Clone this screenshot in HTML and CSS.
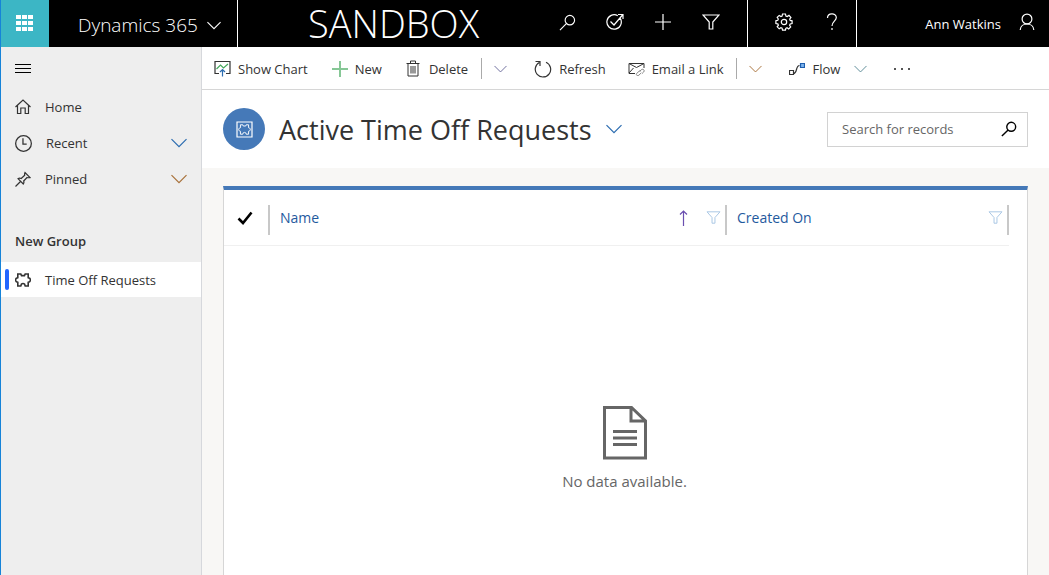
FILE: index.html
```html
<!DOCTYPE html>
<html lang="en">
<head>
  <meta charset="UTF-8" />
  <meta name="viewport" content="width=device-width, initial-scale=1.0" />
  <title>Active Time Off Requests - Dynamics 365</title>
  <link rel="stylesheet" href="styles.css">
</head>
<body>
  <!-- shared icons -->
  <svg class="defs" aria-hidden="true">
    <symbol id="chevron" viewBox="0 0 16 10">
      <path d="M.5 1.2 8 8.7l7.500-7.500" />
    </symbol>
    <symbol id="search" viewBox="0 0 18 18">
      <circle cx="11.500" cy="6.500" r="5" />
      <path d="M8 10 1 17" />
    </symbol>
    <symbol id="filter" viewBox="0 0 18 16">
      <path d="M1 1h16l-6.200 7v7H7.200V8z" />
    </symbol>
    <symbol id="puzzle" viewBox="0 0 16 14">
      <path d="M2.800 1h3l.7 1.600h3L10.200 1h3v3.700l1.300.5c1.200 1 1.200 2.600 0 3.600l-1.300.5V13h-3l-.6-1.800c-.8-.7-2.400-.7-3.200 0L5.800 13h-3V9.300l-1.300-.5c-1.200-1-1.200-2.600 0-3.600l1.300-.5z" />
    </symbol>
  </svg>

  <header class="topbar">
    <button class="waffle" aria-label="Apps">
      <svg width="18" height="18" viewBox="0 0 18 18"><path d="M0 0h5v4H0zM6 0h5v4H6zM12 0h5v4h-5zM0 6h5v4H0zM6 6h5v4H6zM12 6h5v4h-5zM0 12h5v4H0zM6 12h5v4H6zM12 12h5v4h-5z" /></svg>
    </button>
    <button class="brand">Dynamics 365 <svg class="icon" width="14" height="9"><use href="#chevron" /></svg></button>
    <div class="env">SANDBOX</div>
    <div class="tools">
      <button aria-label="Search"><svg class="icon" width="17" height="17"><use href="#search" /></svg></button>
      <button aria-label="Assistant">
        <svg class="icon" width="18" height="18" viewBox="0 0 18 18">
          <path d="M14.400 5.500a7.200 7.200 0 1 1-2.600-2.700M4.500 8.500 8 12l8.500-10M12 1.500h5V6" />
        </svg>
      </button>
      <button aria-label="New record"><svg class="icon" width="18" height="18" viewBox="0 0 18 18"><path d="M9 1v16M1 9h16" /></svg></button>
      <button aria-label="Advanced find"><svg class="icon" width="18" height="16"><use href="#filter" /></svg></button>
    </div>
    <div class="tools help">
      <button aria-label="Settings">
        <svg class="icon" width="18" height="18" viewBox="0 0 18 18">
          <circle cx="9" cy="9" r="2.700" />
          <path d="M7.500 1h3l.4 2 1.300.6L14 2.400 15.900 4.500l-1.200 1.600.5 1.300 1.900.4v2.800l-1.900.4-.6 1.300 1.100 1.700-2 2-1.700-1.200-1.200.6-.3 1.700h-3l-.4-1.900-1.200-.5L4.200 15.800 2.200 13.800l1.200-1.700-.6-1.200L.9 10.500V7.700l1.900-.4.5-1.300L2.200 4.300l2-1.900 1.700 1.100L7.100 3z" />
        </svg>
      </button>
      <button aria-label="Help"><svg class="icon" width="12" height="18" viewBox="0 0 12 18"><path d="M1.500 5C1.500-.3 10.300-.3 10.300 4.500c0 3.500-4.300 4-4.300 8.500M6 15v2" /></svg></button>
    </div>
    <button class="user">Ann Watkins
      <svg class="icon" width="16" height="18" viewBox="0 0 16 18"><circle cx="8" cy="6" r="4.900" /><path d="M1.200 17c.5-8 13.100-8 13.600 0" /></svg>
    </button>
  </header>

  <div class="layout">
    <nav class="sidebar">
      <button class="burger" aria-label="Menu"><svg class="icon" width="16" height="11" viewBox="0 0 16 11"><path d="M0 1.500h16M0 5.500h16M0 9.500h16" /></svg></button>
      <ul>
        <li><a href="#">
          <svg class="icon" width="16" height="16" viewBox="0 0 16 16"><path d="M.5 8 8 1l7.500 7M2.500 6.500v8h3.300V9h4.400v5.500h3.300v-8" /></svg>
          <span>Home</span></a></li>
        <li><a href="#">
          <svg class="icon" width="17" height="17" viewBox="0 0 16 16"><circle cx="8" cy="8" r="7.400" /><path d="M7.500 3v5.500H11" /></svg>
          <span>Recent</span>
          <svg class="icon blue" width="16" height="10"><use href="#chevron" /></svg></a></li>
        <li><a href="#">
          <svg class="icon" width="16" height="16" viewBox="0 0 16 16"><path d="m.5 15.500 5-5M3 7.700l5.300 5.300c.8-1.200.8-2 .4-3l3.300-3.500c1 .4 2 .3 3 .1L10 1.500c-.5 1-.5 1.800-.3 2.800L6.200 7.500C5 7 4 7 3 7.700z" /></svg>
          <span>Pinned</span>
          <svg class="icon brown" width="16" height="10"><use href="#chevron" /></svg></a></li>
      </ul>
      <h2>New Group</h2>
      <ul>
        <li class="selected"><a href="#">
          <svg class="icon bold" width="16" height="14"><use href="#puzzle" /></svg>
          <span>Time Off Requests</span></a></li>
      </ul>
    </nav>

    <main>
      <div class="commands">
        <button class="cmd chart">
          <svg class="icon" width="17" height="17" viewBox="0 0 17 17"><path d="M5 13.500H1v-12h15v12h-4" /><path class="green" d="m2.500 9 4-4 3 3L14 4" /><path class="blue" d="M8.500 16.500v-7M6 12l2.500-2.500L11 12" /></svg>
          Show Chart</button>
        <button class="cmd">
          <svg class="icon green-light" width="16" height="16" viewBox="0 0 16 16"><path d="M8 0v16M0 8h16" /></svg>
          New</button>
        <button class="cmd delete">
          <svg class="icon thin" width="14" height="17" viewBox="0 0 14 17"><path d="M.5 3.500h13M4.500 3V1h5v2M2 3.500V16h10V3.500M5 6v7.500M7 6v7.500M9 6v7.500" /></svg>
          Delete</button>
        <button class="more" aria-label="More delete options"><svg class="icon purple" width="13" height="8"><use href="#chevron" /></svg></button>
        <button class="cmd refresh">
          <svg class="icon" width="18" height="18" viewBox="0 0 18 18"><path d="M12 2.200a7.700 7.700 0 1 1-6.700.3M1.500 1.500H6v4.500" /></svg>
          Refresh</button>
        <button class="cmd email">
          <svg class="icon thin" width="17" height="15" viewBox="0 0 17 15"><path d="M7 12.500H1v-10h15V7M1 2.500l7.500 4 7.500-4M1 12l4.500-5" /><path class="grey" d="m11.500 10.500 1.700-1.700c1.800-1.500 4 .5 2.500 2.200l-1.800 1.700M13 10l-1.400-.2-3 2.700c-1 1.500 1 3 2.300 1.700l2.400-2.400" /></svg>
          Email a Link</button>
        <button class="more" aria-label="More email options"><svg class="icon brown" width="13" height="8"><use href="#chevron" /></svg></button>
        <button class="cmd flow">
          <svg class="icon" width="16" height="14" viewBox="0 0 16 14"><path d="M.5 8.500h4v4h-4zM4.500 11.500c4 0 2-8 6-8" /><path class="node" d="M11.500 1.500h4v4h-4z" /></svg>
          Flow
          <svg class="icon teal" width="13" height="8"><use href="#chevron" /></svg></button>
        <button class="dots" aria-label="More commands"><svg width="16" height="2" viewBox="0 0 16 2"><path d="M0 0h2v2H0zM7 0h2v2H7zM14 0h2v2h-2z" /></svg></button>
      </div>

      <div class="heading">
        <span class="entity"><svg class="icon" width="17" height="17" viewBox="0 0 17 17"><path d="M1 1h15v15H1z" /><use href="#puzzle" x="2" y="3" width="13" height="11" /></svg></span>
        <h1>Active Time Off Requests</h1>
        <button class="view" aria-label="Select a view"><svg class="icon blue" width="16" height="10"><use href="#chevron" /></svg></button>
        <form class="search">
          <input type="text" placeholder="Search for records" aria-label="Search for records" />
          <button type="button" aria-label="Start search"><svg class="icon" width="16" height="16"><use href="#search" /></svg></button>
        </form>
      </div>

      <section class="card">
        <table>
          <thead>
            <tr>
              <th class="check"><div><svg class="icon" width="16" height="14" viewBox="0 0 16 14"><path d="m1.500 7.500 4.500 4.500L14.500 1.500" /></svg></div></th>
              <th><div><a href="#">Name</a>
                <svg class="icon sort" width="9" height="16" viewBox="0 0 9 16"><path d="M4.500 16V1M1 4.500 4.500 1 8 4.500" /></svg>
                <svg class="icon pale" width="15" height="13"><use href="#filter" /></svg></div></th>
              <th class="created"><div><a href="#">Created On</a>
                <svg class="icon pale" width="15" height="13"><use href="#filter" /></svg></div></th>
            </tr>
          </thead>
        </table>
        <div class="empty">
          <svg width="46" height="54" viewBox="0 0 46 54"><path class="sheet" d="M2.500 1.500H29.500L43.500 15v37h-41zM29 1.500V15h14.500" /><path class="lines" d="M11 25.500h24M11 32h24M11 38.500h24" /></svg>
          <p>No data available.</p>
        </div>
      </section>
    </main>
  </div>
</body>
</html>
```
FILE: styles.css
```css
* {
  box-sizing: border-box;
}

body {
  margin: 0;
  min-height: 100vh;
  display: flex;
  flex-direction: column;
  border-left: 1px solid #1683d8;
  font-family: "Open Sans", "Segoe UI", sans-serif;
  font-size: 13px;
  color: #333;
  background: #f8f7f5;
}

button {
  display: flex;
  align-items: center;
  padding: 0;
  border: none;
  background: none;
  color: inherit;
  font: inherit;
  white-space: nowrap;
  cursor: pointer;
}

a {
  color: inherit;
  text-decoration: none;
}

ul {
  margin: 0;
  padding: 0;
  list-style: none;
}

.defs {
  display: none;
}

.icon {
  flex: none;
  fill: none;
  stroke: currentColor;
  stroke-width: 1.2;
}

.blue { stroke: #2b6cb0; }
.brown { stroke: #a8713a; }
.purple { stroke: #6c6c9c; }
.teal { stroke: #5b8a96; }
.green { stroke: #45a85c; }
.green-light { stroke: #86c796; stroke-width: 2; }
.grey { stroke: #888; }
.pale { stroke: #a9c6e4; }
.bold { stroke-width: 1.6; }
.thin { stroke-width: 1; }

/* top bar */
.topbar {
  display: flex;
  height: 47px;
  background: #000;
  color: #fff;
}

.waffle {
  width: 48px;
  justify-content: center;
  background: #3cb6c5;
}

.waffle svg {
  fill: #fff;
}

.brand {
  width: 189px;
  padding: 3px 16px 0 29px;
  justify-content: space-between;
  border-right: 1px solid #fff;
  font-size: 19px;
  font-weight: 300;
}

.env {
  flex: 1;
  padding-left: 70px;
  font-size: 38px;
  font-weight: 300;
  line-height: 46px;
}

.tools {
  display: flex;
  padding: 0 12px;
  border-right: 1px solid #fff;
}

.help {
  padding-right: 0;
}

.tools button {
  width: 48px;
  padding-bottom: 3px;
  justify-content: center;
}

.user {
  width: 192px;
  padding-right: 14px;
  justify-content: flex-end;
  gap: 18px;
}

.user .icon {
  margin-bottom: 3px;
}

/* site map */
.layout {
  flex: 1;
  display: flex;
}

.sidebar {
  width: 201px;
  flex: none;
  border-right: 1px solid #d6d8dc;
  background: #eee;
}

.burger {
  height: 42px;
  padding-left: 14px;
  color: #000;
}

.sidebar a {
  display: flex;
  align-items: center;
  height: 36px;
  padding: 0 14px;
}

.sidebar span {
  flex: 1;
  padding-left: 14px;
}

.sidebar h2 {
  margin: 34px 0 11px;
  padding-left: 14px;
  font-size: 13px;
  line-height: 20px;
  font-weight: 600;
}

.sidebar .selected a {
  height: 35px;
  background: #fff;
}

.selected a::before {
  content: "";
  width: 4px;
  height: 21px;
  margin: 0 6px 0 -10px;
  border-radius: 2px;
  background: #2266ff;
}

main {
  flex: 1;
  min-width: 0;
  display: flex;
  flex-direction: column;
}

/* command bar */
.commands {
  display: flex;
  align-items: center;
  height: 43px;
  padding: 1px 0 0 12px;
  border-bottom: 1px solid #d6d6d6;
  background: #fff;
}

.cmd {
  gap: 7px;
  margin-right: 24px;
}

.delete { gap: 9px; margin-right: 13px; }
.refresh { margin-right: 22px; }
.email { margin-right: 12px; }
.flow { gap: 8px; }

.more {
  height: 21px;
  padding-left: 12px;
  margin-right: 27px;
  border-left: 1px solid #aaa;
}

.flow .teal {
  margin-left: 6px;
}

.node {
  fill: #7db4ee;
  stroke: #1f5fae;
}

.dots {
  margin-left: 3px;
}

.dots svg {
  fill: #555;
}

/* view title and search */
.heading {
  display: flex;
  align-items: center;
  height: 78px;
  padding: 0 21px;
  background: #fff;
}

.entity {
  display: flex;
  align-items: center;
  justify-content: center;
  width: 42px;
  height: 42px;
  border-radius: 50%;
  background: #4579b8;
  color: #fff;
}

.heading h1 {
  margin: 0 14px;
  font-size: 27px;
  font-weight: 400;
  white-space: nowrap;
}

.search {
  display: flex;
  width: 201px;
  height: 35px;
  margin-left: auto;
  padding: 0 10px 0 14px;
  border: 1px solid #d2d2d2;
}

.search input {
  flex: 1;
  min-width: 0;
  padding: 0;
  border: none;
  outline: none;
  background: none;
  font: inherit;
}

.search input::placeholder {
  color: #666;
}

.search button {
  color: #000;
}

.search .icon {
  stroke-width: 1.6;
}

/* record grid */
.card {
  flex: 1;
  display: flex;
  flex-direction: column;
  margin: 18px 21px 0;
  padding-right: 18px;
  border: 1px solid #d6d6d6;
  border-top: 4px solid #4579b8;
  border-bottom: none;
  background: #fff;
}

table {
  width: 100%;
  border-collapse: collapse;
  table-layout: fixed;
  color: #1f5a9e;
  font-size: 14px;
}

th {
  height: 55px;
  padding: 5px 0 0;
  border-bottom: 1px solid #f0f0f0;
  font-weight: 400;
}

th div {
  display: flex;
  align-items: center;
  height: 30px;
  padding: 0 4px 4px 10px;
  border-right: 2px solid #c8c8c8;
}

th a {
  flex: 1;
  text-align: left;
}

.check {
  width: 46px;
  color: #000;
}

.check div {
  padding-left: 13px;
}

.check .icon {
  stroke-width: 2.6;
}

.created {
  width: 282px;
}

.sort {
  margin-right: 18px;
  stroke: #6a4fb0;
}

.empty {
  flex: 1;
  padding: 160px 0 0 16px;
  text-align: center;
  font-size: 15px;
  color: #666;
}

.empty svg {
  display: block;
  margin: 0 auto;
  fill: none;
  stroke: #666;
}

.sheet { stroke-width: 3; }
.lines { stroke-width: 3; }

.empty p {
  margin: 11px 0 0;
  line-height: 20px;
}
```
